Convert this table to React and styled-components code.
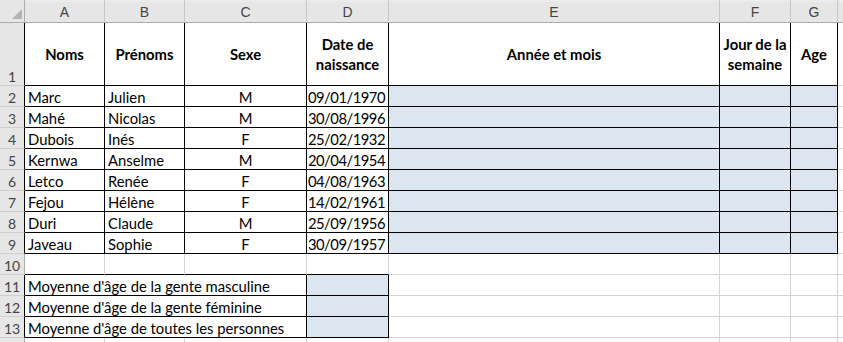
import React from "react";
import styled, { createGlobalStyle } from "styled-components";

const GRID = "#d4d4d4";
const BLACK = "#000000";
const FILL = "#dce6f1";

const GlobalStyle = createGlobalStyle`
  html, body { margin: 0; padding: 0; background: #ffffff; overflow: hidden; }
  body { font-family: Lato, "Open Sans", sans-serif; }
`;

const Sheet = styled.div`
  display: grid;
  grid-template-columns: 25px 80px 80px 122px 82px 331px 71px 47px 1fr;
  grid-template-rows: 23px 63px repeat(13, 21px);
  width: 843px;
  height: 342px;
  overflow: hidden;
  background: #ffffff;
`;

const HeadBase = styled.div`
  box-sizing: border-box;
  background: #e6e6e6;
  color: #444444;
  display: flex;
  justify-content: center;
`;

const Corner = styled(HeadBase)`
  border-right: 1px solid #ababab;
  border-bottom: 1px solid #ababab;
  justify-content: flex-end;
  align-items: flex-end;
  padding: 0 2px 3px 0;
`;

const ColHead = styled(HeadBase)`
  border-right: 1px solid #c8c8c8;
  border-bottom: 1px solid #ababab;
  align-items: center;
  padding-top: 1px;
  font-family: "Liberation Sans", Arial, sans-serif;
  font-size: 14px;
  background: linear-gradient(#ececec 0, #ececec 2px, #e6e6e6 2px);
`;

const RowHead = styled(HeadBase)`
  border-right: 1px solid ${(p) => (p.$black ? BLACK : "#ababab")};
  border-bottom: 1px solid #d0d0d0;
  align-items: flex-end;
  font-size: 14px;
  line-height: 17px;
`;

const Cell = styled.div`
  box-sizing: border-box;
  grid-column: span ${(p) => p.$span || 1};
  background: ${(p) => (p.$fill ? FILL : "#ffffff")};
  border-right: 1px solid ${(p) => (p.$rb ? BLACK : GRID)};
  border-bottom: 1px solid ${(p) => (p.$bb ? BLACK : GRID)};
  display: flex;
  align-items: ${(p) => (p.$head ? "center" : "flex-end")};
  justify-content: ${(p) =>
    p.$align === "center" ? "center" : p.$align === "right" ? "flex-end" : "flex-start"};
  text-align: ${(p) => p.$align || "left"};
  padding: 0 3px 0 3px;
  font-size: 14.8px;
  letter-spacing: ${(p) => (p.$digits ? "-0.5px" : "0")};
  line-height: ${(p) => (p.$head ? "20px" : "17px")};
  font-weight: ${(p) => (p.$head ? 700 : 400)};
  color: #000000;
  white-space: nowrap;
  overflow: visible;
`;

const Lines = styled.span`
  display: flex;
  flex-direction: column;
  align-items: center;
`;

const cols = ["A", "B", "C", "D", "E", "F", "G", ""];
const aligns = ["left", "left", "center", "right", "left", "left", "left", "left"];

const header = ["Noms", "Prénoms", "Sexe", ["Date de", "naissance"], "Année et mois", ["Jour de la", "semaine"], "Age", ""];

const people = [
  ["Marc", "Julien", "M", "09/01/1970"],
  ["Mahé", "Nicolas", "M", "30/08/1996"],
  ["Dubois", "Inés", "F", "25/02/1932"],
  ["Kernwa", "Anselme", "M", "20/04/1954"],
  ["Letco", "Renée", "F", "04/08/1963"],
  ["Fejou", "Hélène", "F", "14/02/1961"],
  ["Duri", "Claude", "M", "25/09/1956"],
  ["Javeau", "Sophie", "F", "30/09/1957"],
];

const averages = [
  "Moyenne d'âge de la gente masculine",
  "Moyenne d'âge de la gente féminine",
  "Moyenne d'âge de toutes les personnes",
];

const CornerMark = () => (
  <svg width="10" height="10" viewBox="0 0 10 10">
    <polygon points="10,0 10,10 0,10" fill="#b4b4b4" />
  </svg>
);

export default function App() {
  const cells = [];
  cells.push(
    <Corner key="corner">
      <CornerMark />
    </Corner>
  );
  cols.forEach((c, i) => cells.push(<ColHead key={"h" + i}>{c}</ColHead>));

  // Row 1: headers
  cells.push(<RowHead key="r1" $black>1</RowHead>);
  header.forEach((h, i) => {
    const inTable = i < 7;
    cells.push(
      <Cell key={"1-" + i} $head $align="center" $rb={inTable} $bb={inTable}>
        {Array.isArray(h) ? (
          <Lines>
            {h.map((l) => (
              <span key={l}>{l}</span>
            ))}
          </Lines>
        ) : (
          h
        )}
      </Cell>
    );
  });

  // Rows 2-9: data
  people.forEach((p, r) => {
    const n = r + 2;
    cells.push(
      <RowHead key={"r" + n} $black>
        {n}
      </RowHead>
    );
    for (let i = 0; i < 8; i++) {
      const inTable = i < 7;
      cells.push(
        <Cell
          key={n + "-" + i}
          $align={aligns[i]}
          $digits={i === 3}
          $fill={i >= 4 && i <= 6}
          $rb={inTable}
          $bb={inTable}
        >
          {p[i] || ""}
        </Cell>
      );
    }
  });

  // Row 10: empty
  cells.push(<RowHead key="r10">10</RowHead>);
  for (let i = 0; i < 8; i++) {
    cells.push(<Cell key={"10-" + i} $bb={i < 4} />);
  }

  // Rows 11-13: averages
  averages.forEach((label, r) => {
    const n = r + 11;
    cells.push(
      <RowHead key={"r" + n} $black>
        {n}
      </RowHead>
    );
    cells.push(
      <Cell key={n + "-a"} $span={3} $rb $bb>
        {label}
      </Cell>
    );
    cells.push(<Cell key={n + "-d"} $fill $rb $bb />);
    for (let i = 4; i < 8; i++) {
      cells.push(<Cell key={n + "-" + i} />);
    }
  });

  // Row 14: partially visible, its number lies below the fold
  cells.push(<RowHead key="r14" />);
  for (let i = 0; i < 8; i++) cells.push(<Cell key={"14-" + i} />);

  return (
    <>
      <GlobalStyle />
      <Sheet>{cells}</Sheet>
    </>
  );
}
